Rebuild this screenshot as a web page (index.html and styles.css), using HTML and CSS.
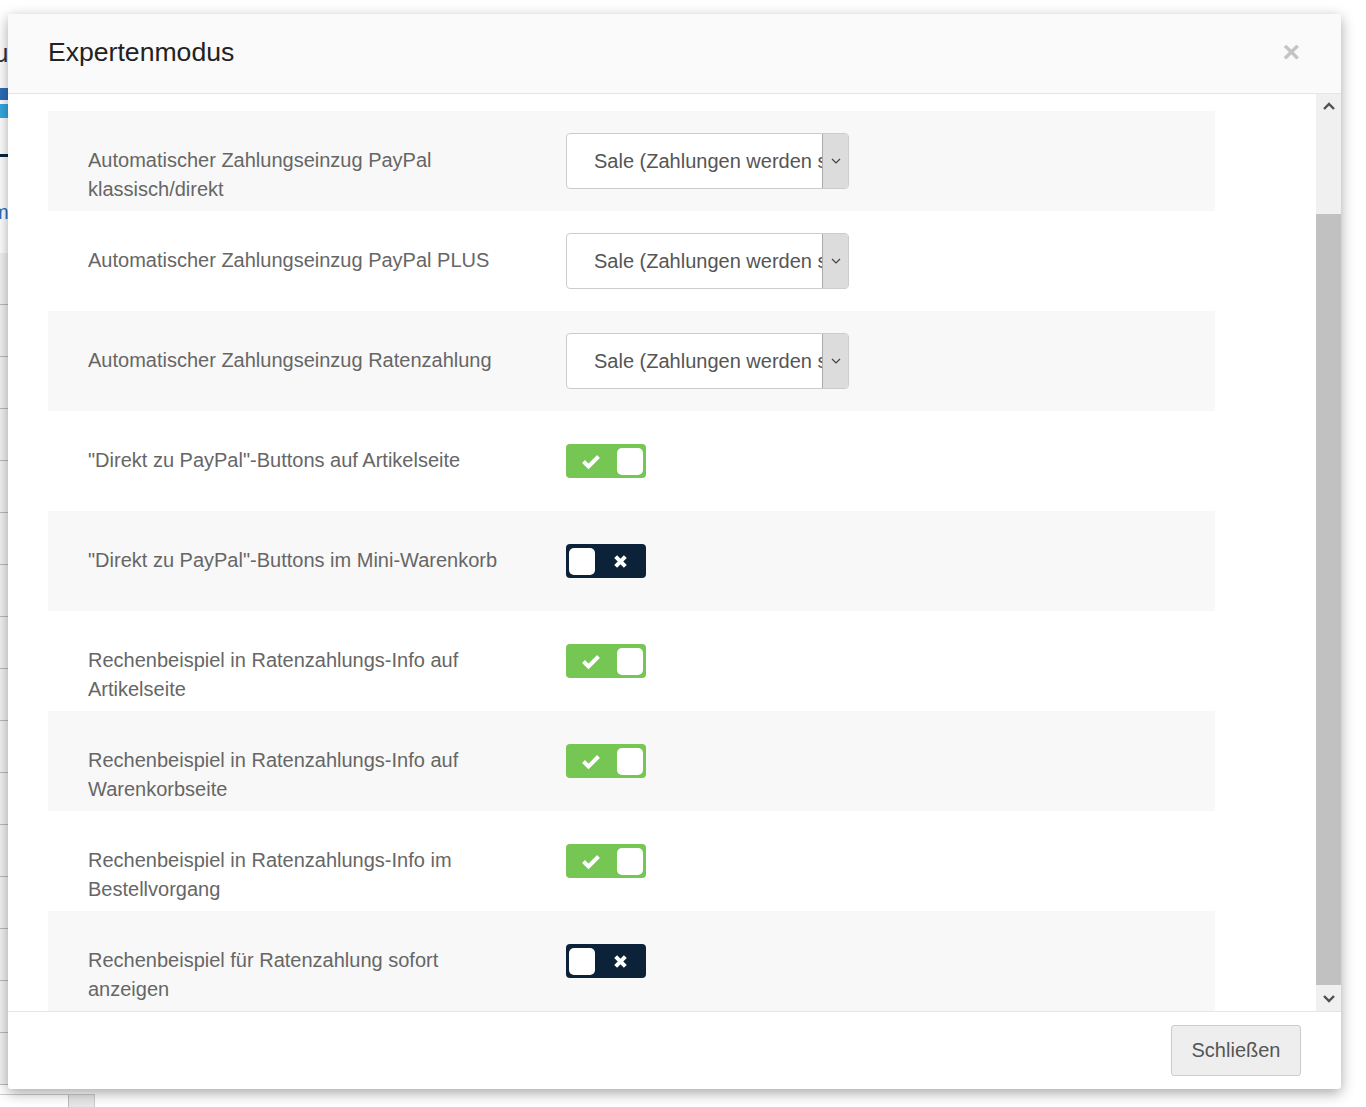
FILE: index.html
```html
<!DOCTYPE html>
<html lang="de">
<head>
<meta charset="utf-8">
<title>Expertenmodus</title>
<link rel="stylesheet" href="styles.css">
</head>
<body>
<div class="page">
  <div class="page-top">u</div>
  <div class="page-logo"></div>
  <div class="page-bar"></div>
  <div class="page-link">m</div>
  <div class="page-table">
    <div class="page-row"></div>
    <div class="page-row"></div>
    <div class="page-row"></div>
    <div class="page-row"></div>
    <div class="page-row"></div>
    <div class="page-row"></div>
    <div class="page-row"></div>
    <div class="page-row"></div>
    <div class="page-row"></div>
    <div class="page-row"></div>
    <div class="page-row"></div>
    <div class="page-row"></div>
    <div class="page-row"></div>
    <div class="page-row"></div>
    <div class="page-row"></div>
    <div class="page-row"></div>
  </div>
  <div class="page-bottom"><span class="page-btn"></span></div>
</div>

<div class="modal">
  <div class="modal-header">
    <h4 class="modal-title">Expertenmodus</h4>
    <span class="close">&times;</span>
  </div>
  <div class="modal-body">
    <div class="body-content">
      <div class="row alt">
        <div class="label">Automatischer Zahlungseinzug PayPal klassisch/direkt</div>
        <div class="control"><div class="select"><span class="select-text">Sale (Zahlungen werden sofort eingezogen)</span><span class="select-arrow"><svg width="10" height="6" viewBox="0 0 10 6"><path d="M1 1l4 4 4-4" fill="none" stroke="#444" stroke-width="1.2"/></svg></span></div></div>
      </div>
      <div class="row">
        <div class="label">Automatischer Zahlungseinzug PayPal PLUS</div>
        <div class="control"><div class="select"><span class="select-text">Sale (Zahlungen werden sofort eingezogen)</span><span class="select-arrow"><svg width="10" height="6" viewBox="0 0 10 6"><path d="M1 1l4 4 4-4" fill="none" stroke="#444" stroke-width="1.2"/></svg></span></div></div>
      </div>
      <div class="row alt">
        <div class="label">Automatischer Zahlungseinzug Ratenzahlung</div>
        <div class="control"><div class="select"><span class="select-text">Sale (Zahlungen werden sofort eingezogen)</span><span class="select-arrow"><svg width="10" height="6" viewBox="0 0 10 6"><path d="M1 1l4 4 4-4" fill="none" stroke="#444" stroke-width="1.2"/></svg></span></div></div>
      </div>
      <div class="row">
        <div class="label">"Direkt zu PayPal"-Buttons auf Artikelseite</div>
        <div class="control toggle-wrap"><div class="toggle on"><svg class="icon-check" width="20" height="15" viewBox="0 0 20 15"><path d="M2.5 7.5l5 5 10-10" fill="none" stroke="#fff" stroke-width="4"/></svg><span class="knob"></span></div></div>
      </div>
      <div class="row alt">
        <div class="label">"Direkt zu PayPal"-Buttons im Mini-Warenkorb</div>
        <div class="control toggle-wrap"><div class="toggle off"><span class="knob"></span><svg class="icon-x" width="15" height="15" viewBox="0 0 14 14"><path d="M2.5 2.5l9 9M11.5 2.5l-9 9" fill="none" stroke="#fff" stroke-width="3.8"/></svg></div></div>
      </div>
      <div class="row">
        <div class="label">Rechenbeispiel in Ratenzahlungs-Info auf Artikelseite</div>
        <div class="control toggle-wrap"><div class="toggle on"><svg class="icon-check" width="20" height="15" viewBox="0 0 20 15"><path d="M2.5 7.5l5 5 10-10" fill="none" stroke="#fff" stroke-width="4"/></svg><span class="knob"></span></div></div>
      </div>
      <div class="row alt">
        <div class="label">Rechenbeispiel in Ratenzahlungs-Info auf Warenkorbseite</div>
        <div class="control toggle-wrap"><div class="toggle on"><svg class="icon-check" width="20" height="15" viewBox="0 0 20 15"><path d="M2.5 7.5l5 5 10-10" fill="none" stroke="#fff" stroke-width="4"/></svg><span class="knob"></span></div></div>
      </div>
      <div class="row">
        <div class="label">Rechenbeispiel in Ratenzahlungs-Info im Bestellvorgang</div>
        <div class="control toggle-wrap"><div class="toggle on"><svg class="icon-check" width="20" height="15" viewBox="0 0 20 15"><path d="M2.5 7.5l5 5 10-10" fill="none" stroke="#fff" stroke-width="4"/></svg><span class="knob"></span></div></div>
      </div>
      <div class="row alt">
        <div class="label">Rechenbeispiel für Ratenzahlung sofort anzeigen</div>
        <div class="control toggle-wrap"><div class="toggle off"><span class="knob"></span><svg class="icon-x" width="15" height="15" viewBox="0 0 14 14"><path d="M2.5 2.5l9 9M11.5 2.5l-9 9" fill="none" stroke="#fff" stroke-width="3.8"/></svg></div></div>
      </div>
      <div class="row">
        <div class="label">Ratenzahlung im Warenkorb anzeigen</div>
        <div class="control toggle-wrap"><div class="toggle on"><svg class="icon-check" width="20" height="15" viewBox="0 0 20 15"><path d="M2.5 7.5l5 5 10-10" fill="none" stroke="#fff" stroke-width="4"/></svg><span class="knob"></span></div></div>
      </div>
    </div>
    <div class="scrollbar">
      <span class="sb-btn"><svg width="12" height="8" viewBox="0 0 12 8"><path d="M1 7l5-5 5 5" fill="none" stroke="#505050" stroke-width="2.4"/></svg></span>
      <span class="sb-track"><span class="sb-thumb"></span></span>
      <span class="sb-btn"><svg width="12" height="8" viewBox="0 0 12 8"><path d="M1 1l5 5 5-5" fill="none" stroke="#505050" stroke-width="2.4"/></svg></span>
    </div>
  </div>
  <div class="modal-footer">
    <button class="btn">Schließen</button>
  </div>
</div>
</body>
</html>
```

FILE: styles.css
```css
* { box-sizing: border-box; }
html, body {
  margin: 0;
  padding: 0;
  height: 1107px;
  overflow: hidden;
  background: #fff;
  font-family: "Liberation Sans", Arial, sans-serif;
}

/* background page (mostly hidden behind modal) */
.page {
  width: 1366px;
  height: 1107px;
  position: relative;
}
.page-top {
  padding: 38px 0 0 0;
  height: 80px;
  font-size: 26px;
  color: #333;
  margin-left: -6px;
}
.page-logo {
  height: 30px;
  width: 8px;
  margin-top: 8px;
  background: linear-gradient(#2a6ebb 0 40%, transparent 40% 55%, #35a7e0 55% 100%);
}
.page-bar {
  margin-top: 36px;
  height: 3px;
  width: 20px;
  background: #0b2540;
}
.page-link {
  margin-top: 44px;
  font-size: 20px;
  color: #2a6ebb;
  margin-left: -8px;
  height: 40px;
}
.page-table {
  margin-top: 12px;
}
.page-row {
  height: 52px;
  border-bottom: 1px solid #bbb;
  background: #f2f2f2;
  width: 40px;
}
.page-bottom {
  position: absolute;
  left: 0;
  top: 1094px;
  width: 95px;
  height: 20px;
  border-top: 1px solid #ccc;
  border-right: 1px solid #ccc;
}
.page-btn {
  position: absolute;
  left: 68px;
  top: 0;
  width: 26px;
  height: 20px;
  background: #e6e6e6;
  border-left: 1px solid #bbb;
}

/* modal */
.modal {
  position: absolute;
  left: 8px;
  top: 14px;
  width: 1333px;
  height: 1075px;
  background: #fff;
  border-radius: 3px;
  box-shadow: 0 4px 14px rgba(0, 0, 0, 0.35);
  display: flex;
  flex-direction: column;
  overflow: hidden;
}
.modal-header {
  height: 80px;
  flex: none;
  background: #fafafa;
  border-bottom: 1px solid #e5e5e5;
  display: flex;
  align-items: center;
  justify-content: space-between;
  padding: 0 41px 0 40px;
}
.modal-title {
  margin: 0;
  font-size: 26.6px;
  font-weight: normal;
  color: #222;
  line-height: 1;
  padding-bottom: 2px;
}
.close {
  font-size: 30px;
  font-weight: bold;
  color: #c4c4c4;
  line-height: 1;
  padding-bottom: 4px;
}

.modal-body {
  flex: none;
  height: 917px;
  display: flex;
}
.body-content {
  flex: 1;
  overflow: hidden;
  padding: 17px 0 0 40px;
}
.row {
  width: 1167px;
  height: 100px;
  display: grid;
  grid-template-columns: 478px 1fr;
  padding-left: 40px;
  flex: none;
}
.row.alt { background: #f8f8f8; }
.label {
  padding-top: 35px;
  font-size: 20px;
  line-height: 29px;
  color: #666;
  width: 420px;
}
.control { padding-top: 22px; }
.toggle-wrap { padding-top: 33px; }

.select {
  width: 283px;
  height: 56px;
  border: 1px solid #ccc;
  border-radius: 4px;
  background: #fff;
  display: flex;
  overflow: hidden;
}
.select-text {
  flex: 1;
  overflow: hidden;
  white-space: nowrap;
  padding-left: 27px;
  font-size: 20px;
  line-height: 54px;
  color: #555;
}
.select-arrow {
  flex: none;
  width: 26px;
  background: #dcdcdc;
  border-left: 1px solid #aaa;
  display: flex;
  align-items: center;
  justify-content: center;
}

.toggle {
  width: 80px;
  height: 34px;
  border-radius: 4px;
  display: flex;
  align-items: center;
  padding: 0 3px;
}
.toggle.on {
  background: #76c653;
  justify-content: space-between;
  padding-left: 15px;
}
.toggle.off {
  background: #0b2238;
  justify-content: space-between;
  padding-right: 18px;
}
.knob {
  width: 26px;
  height: 27px;
  background: #fff;
  border-radius: 5px;
}

.scrollbar {
  flex: none;
  width: 25px;
  background: #f0f0f0;
  display: flex;
  flex-direction: column;
}
.sb-btn {
  height: 24px;
  flex: none;
  display: flex;
  align-items: center;
  justify-content: center;
}
.sb-track {
  flex: 1;
  padding: 96px 0 2px 0;
  display: flex;
}
.sb-thumb {
  flex: 1;
  background: #c1c1c1;
}

.modal-footer {
  flex: 1;
  border-top: 1px solid #e5e5e5;
  display: flex;
  justify-content: flex-end;
  align-items: flex-start;
  padding: 13px 40px 0 0;
}
.btn {
  width: 130px;
  height: 51px;
  background: #eee;
  border: 1px solid #ccc;
  border-radius: 3px;
  font-family: "Liberation Sans", Arial, sans-serif;
  font-size: 20px;
  color: #555;
  padding: 0;
}
```
